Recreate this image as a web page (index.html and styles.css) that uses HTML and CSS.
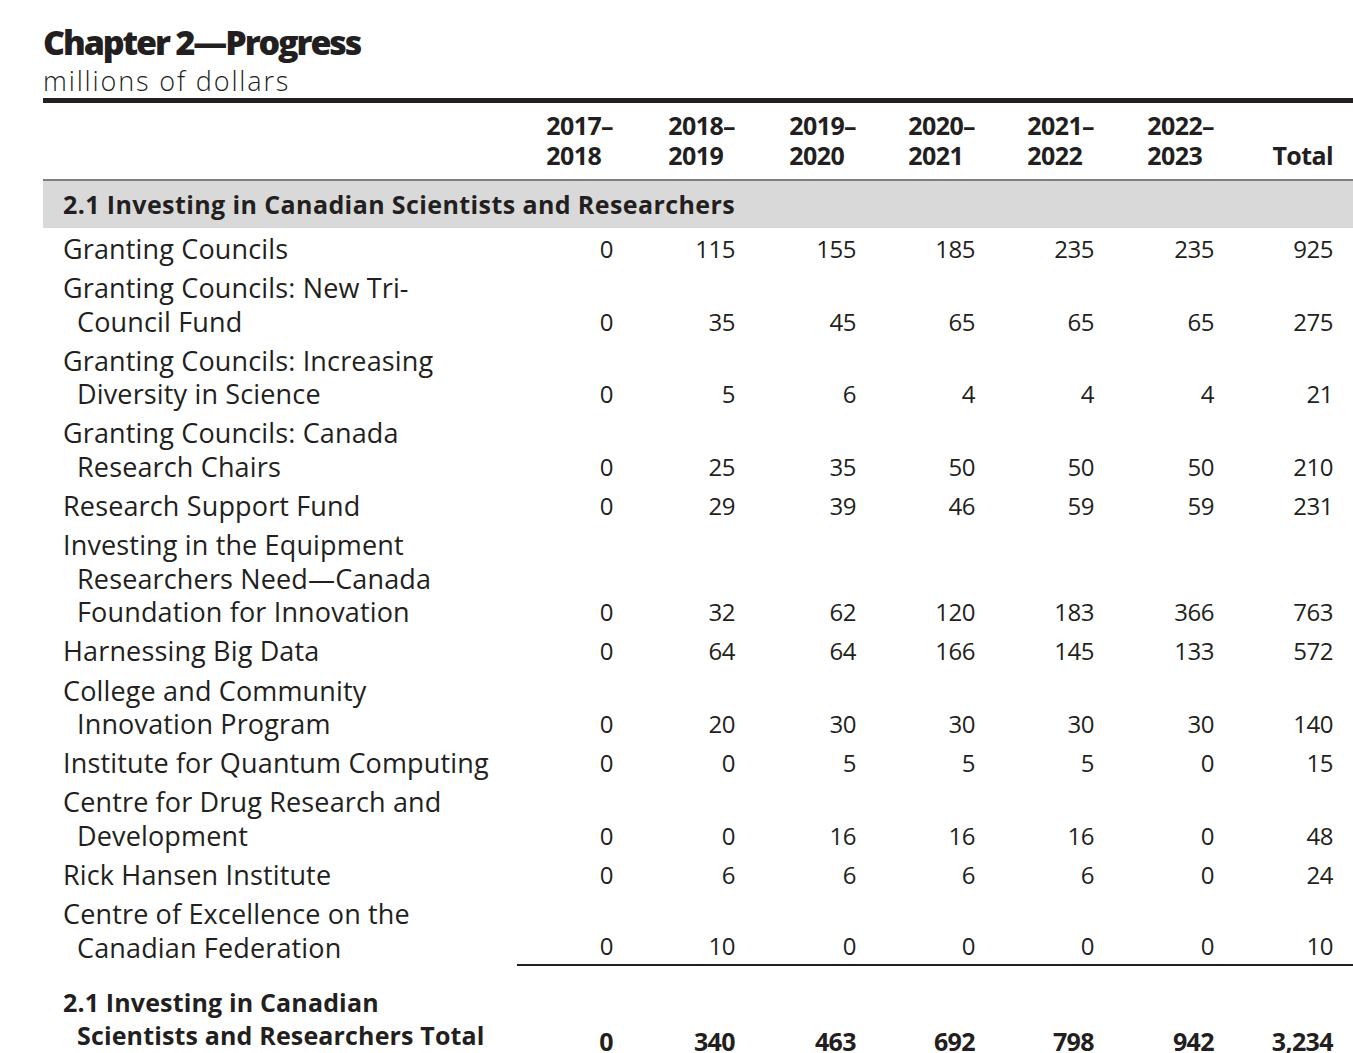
FILE: index.html
```html
<!DOCTYPE html>
<html lang="en">
<head>
<meta charset="utf-8">
<title>Chapter 2—Progress</title>
<link rel="stylesheet" href="styles.css">
</head>
<body>
<div class="page">
  <h1 class="title">Chapter 2—Progress</h1>
  <p class="subtitle">millions of dollars</p>
  <table class="budget">
    <colgroup>
      <col class="c-label">
      <col class="c116"><col class="c122"><col class="c121"><col class="c119"><col class="c119"><col class="c120"><col class="c119">
    </colgroup>
    <thead>
      <tr>
        <th></th>
        <th><span class="yr">2017–<br>2018</span></th>
        <th><span class="yr">2018–<br>2019</span></th>
        <th><span class="yr">2019–<br>2020</span></th>
        <th><span class="yr">2020–<br>2021</span></th>
        <th><span class="yr">2021–<br>2022</span></th>
        <th><span class="yr">2022–<br>2023</span></th>
        <th>Total</th>
      </tr>
    </thead>
    <tbody>
      <tr class="section"><td colspan="8">2.1 Investing in Canadian Scientists and Researchers</td></tr>
      <tr><td class="label">Granting Councils</td><td class="num">0</td><td class="num">115</td><td class="num">155</td><td class="num">185</td><td class="num">235</td><td class="num">235</td><td class="num">925</td></tr>
      <tr><td class="label">Granting Councils: New Tri-<br>Council Fund</td><td class="num">0</td><td class="num">35</td><td class="num">45</td><td class="num">65</td><td class="num">65</td><td class="num">65</td><td class="num">275</td></tr>
      <tr><td class="label">Granting Councils: Increasing<br>Diversity in Science</td><td class="num">0</td><td class="num">5</td><td class="num">6</td><td class="num">4</td><td class="num">4</td><td class="num">4</td><td class="num">21</td></tr>
      <tr><td class="label">Granting Councils: Canada<br>Research Chairs</td><td class="num">0</td><td class="num">25</td><td class="num">35</td><td class="num">50</td><td class="num">50</td><td class="num">50</td><td class="num">210</td></tr>
      <tr><td class="label">Research Support Fund</td><td class="num">0</td><td class="num">29</td><td class="num">39</td><td class="num">46</td><td class="num">59</td><td class="num">59</td><td class="num">231</td></tr>
      <tr><td class="label">Investing in the Equipment<br>Researchers Need—Canada<br>Foundation for Innovation</td><td class="num">0</td><td class="num">32</td><td class="num">62</td><td class="num">120</td><td class="num">183</td><td class="num">366</td><td class="num">763</td></tr>
      <tr><td class="label">Harnessing Big Data</td><td class="num">0</td><td class="num">64</td><td class="num">64</td><td class="num">166</td><td class="num">145</td><td class="num">133</td><td class="num">572</td></tr>
      <tr><td class="label">College and Community<br>Innovation Program</td><td class="num">0</td><td class="num">20</td><td class="num">30</td><td class="num">30</td><td class="num">30</td><td class="num">30</td><td class="num">140</td></tr>
      <tr><td class="label">Institute for Quantum Computing</td><td class="num">0</td><td class="num">0</td><td class="num">5</td><td class="num">5</td><td class="num">5</td><td class="num">0</td><td class="num">15</td></tr>
      <tr><td class="label">Centre for Drug Research and<br>Development</td><td class="num">0</td><td class="num">0</td><td class="num">16</td><td class="num">16</td><td class="num">16</td><td class="num">0</td><td class="num">48</td></tr>
      <tr><td class="label">Rick Hansen Institute</td><td class="num">0</td><td class="num">6</td><td class="num">6</td><td class="num">6</td><td class="num">6</td><td class="num">0</td><td class="num">24</td></tr>
      <tr class="last"><td class="label">Centre of Excellence on the<br>Canadian Federation</td><td class="num">0</td><td class="num">10</td><td class="num">0</td><td class="num">0</td><td class="num">0</td><td class="num">0</td><td class="num">10</td></tr>
      <tr class="total"><td class="label">2.1 Investing in Canadian<br>Scientists and Researchers Total</td><td class="num">0</td><td class="num">340</td><td class="num">463</td><td class="num">692</td><td class="num">798</td><td class="num">942</td><td class="num">3,234</td></tr>
    </tbody>
  </table>
</div>
</body>
</html>
```

FILE: styles.css
```css
html {
  overflow: hidden;
}

body {
  margin: 0;
  background: #ffffff;
  color: #231f20;
  font-family: "Open Sans", "Liberation Sans", sans-serif;
}

.page {
  padding: 22px 0 0 43px;
}

.title {
  margin: 0;
  font-size: 34px;
  line-height: 40px;
  font-weight: 800;
  letter-spacing: -2.1px;
}

.subtitle {
  margin: 3px 0 1px;
  font-size: 27px;
  line-height: 32px;
  font-weight: 300;
  letter-spacing: 1.85px;
}

.budget {
  width: 1310px;
  table-layout: fixed;
  border-collapse: separate;
  border-spacing: 0;
}

.c-label { width: 474px; }
.c116 { width: 116px; }
.c119 { width: 119px; }
.c120 { width: 120px; }
.c121 { width: 121px; }
.c122 { width: 122px; }

.budget thead th {
  border-top: 5px solid #231f20;
  border-bottom: 2px solid #7f7f7f;
  padding: 7px 20px 9px 0;
  vertical-align: bottom;
  text-align: right;
  font-size: 25px;
  line-height: 30px;
  font-weight: 700;
  letter-spacing: -0.6px;
}

.yr {
  display: inline-block;
  text-align: left;
}

.section td {
  background: #d9d9d9;
  padding: 7px 20px 7px 20px;
  font-size: 25px;
  line-height: 33px;
  font-weight: 700;
  letter-spacing: 0.4px;
}

.budget tbody td {
  vertical-align: bottom;
}

.label {
  padding: 4px 10px 2px 34px;
  text-indent: -14px;
  font-size: 27px;
  line-height: 33.3px;
  font-weight: 400;
  letter-spacing: 0.15px;
  white-space: nowrap;
}

.num {
  padding: 4px 20px 2px 0;
  text-align: right;
  font-size: 24px;
  line-height: 33.3px;
  font-weight: 400;
  letter-spacing: -0.5px;
}

.last .num {
  border-bottom: 2px solid #231f20;
}

.total td {
  padding-top: 20px;
}

.total .label {
  font-weight: 700;
  font-size: 25px;
  letter-spacing: 0.15px;
}

.total .num {
  font-weight: 700;
  font-size: 25px;
  line-height: 26px;
  padding-bottom: 1px;
  letter-spacing: -0.6px;
}
```
